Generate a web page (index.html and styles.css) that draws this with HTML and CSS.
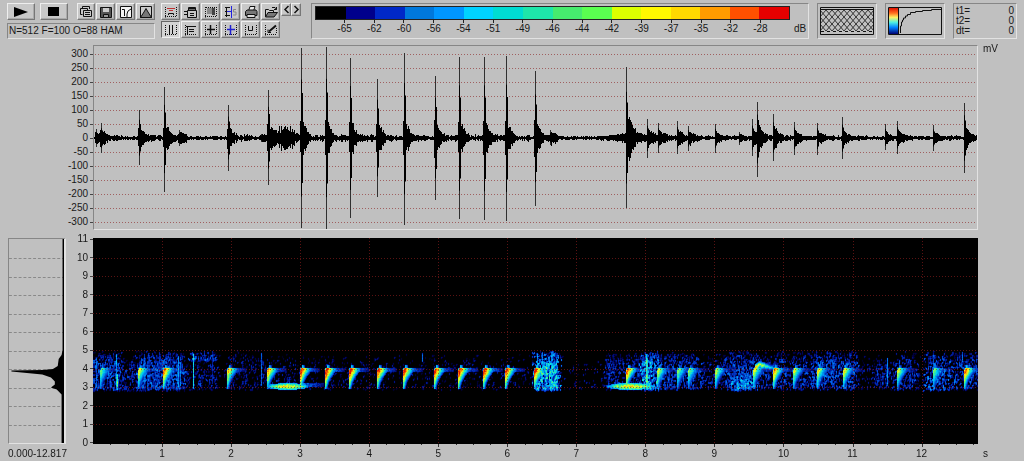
FILE: index.html
```html
<!DOCTYPE html>
<html lang="en">
<head>
    <meta charset="UTF-8">
    <meta name="viewport" content="width=device-width, initial-scale=1.0">
    <title>Sound Analyser</title>
    <link rel="stylesheet" href="styles.css">
</head>
<body>
    <header>
        <div class="controls">
            <div class="btn-row">
                <button class="wide" aria-label="Play"><svg width="16" height="10"><path d="M1 0 15 5 1 10z" fill="#000"/></svg></button>
                <button class="wide stop" aria-label="Stop"><svg width="11" height="9"><path d="M0 0h11v9H0z" fill="#000"/></svg></button>
                <button aria-label="Copy"><svg class="ico"><path d="M3.500 3V.5h7V3M1.500 2.500h7v2M1.500 2.500v6h2M4.500 4.500h8v6h-8zM6 6.500h5M6 8.500h5"/></svg></button>
                <button aria-label="Save"><svg class="ico"><path d="M1.500 1.500h11v10h-11z" fill="#555"/><path d="M4 2h6v4H4z" fill="#ccc" stroke="none"/><path d="M4.500 8.500h5v3h-5z" fill="#999"/></svg></button>
                <button aria-label="Transfer curve"><svg class="ico"><path d="M1.500.5h11v11h-11z" fill="#f4f4f4"/><path d="M3 3.500h2.500V10M8 11V8l1-3 3-2"/></svg></button>
                <button aria-label="Envelope"><svg class="ico"><path d="M1.500.5h11v11h-11z" fill="#ccc"/><path d="M1.500 11.500 5 6l2-3.500L9 6l3.500 5.500z" fill="#777"/></svg></button>
            </div>
            <p class="status inset">N=512 F=100 O=88 HAM</p>
        </div>

        <div class="tools">
            <div class="btn-row">
                <button aria-label="Display"><svg class="ico"><path class="frame" d="M1.500 1v10.500M1 10.500h12M12.500 1v9"/><path d="M3 2.500h8M5 4.500h4" stroke="#c03030"/><path d="M4.500 9V7.500h5V9"/></svg></button>
                <button aria-label="Print setup"><svg class="ico"><path d="M4.500 4V1.500h7V4M3.500 4.500h9v7h-9zM0 5.500h3M0 8.500h3M6 7.500h4M6 9.500h4"/><path d="M5 2.500h6" stroke-width="2"/></svg></button>
                <button aria-label="Select area"><svg class="ico"><path d="M3 2h7v6H3z" fill="#888" stroke="none"/><path class="frame" d="M1.500 1v10.500M1 10.500h12M12.500 1v9M2 1.500h10"/><path d="M8 2h3v7H8z" fill="#444" stroke="none"/></svg></button>
                <button aria-label="Spectrum at cursor"><svg class="ico"><path d="M2.500 1v10M1 1.500h5M1 5.500h5M1 9.500h5"/><path d="M7.500 0v12M3 5.500h4" stroke="#2020e0"/><path d="M12 3.500H9.500v2.500H12v3H9" stroke="#888"/></svg></button>
                <button aria-label="Print"><svg class="ico"><path d="M4.500 5 6 .5h5L9.500 5" fill="#eee"/><path d="M1.500 5.500 3 4h9l1 1.500v4H1.500z" fill="#777"/><path d="M3 8.500h8v3H3z" fill="#ddd"/></svg></button>
                <button aria-label="Open"><svg class="ico"><path d="M1.500 11V3.500h3l1 1h4V6" fill="#ccc"/><path d="M1.500 11 4 6.500h9.500L10 11z" fill="#777"/><path d="M8 1.500h3l1.500 2M12.500 1v2.500H10"/></svg></button>
                <button class="step" aria-label="Previous"><svg width="7" height="9"><path d="M5.500 1 2 4.500l3.500 3.500"/></svg></button><button class="step" aria-label="Next"><svg width="7" height="9"><path d="M1.500 1 5 4.500 1.500 8"/></svg></button>
            </div>
            <div class="btn-row">
                <button class="pressed" aria-label="Time cursors"><svg class="ico"><path class="frame" d="M1.500 1v10.500M1 10.500h12M12.500 1v9"/><path d="M5.500 1v9M8.500 1v9"/></svg></button>
                <button aria-label="Frequency cursors"><svg class="ico"><path class="frame" d="M1.500 1v10.500M1 10.500h12"/><path d="M2 2.500h10M5 5.500h5M5 7.500h5M3.500 2v8"/></svg></button>
                <button aria-label="Cross cursor"><svg class="ico"><path class="frame" d="M1.500 1v10.500M1 10.500h12M12.500 1v9"/><path d="M6.500 1v9M3 5.500h8" stroke-width="1.500"/></svg></button>
                <button aria-label="Marker"><svg class="ico"><path class="frame" d="M1.500 1v10.500M1 10.500h12M12.500 1v9"/><path d="M6.500 1v10M3 5.500h8" stroke="#2020d0" stroke-width="1.500"/></svg></button>
                <button aria-label="Box cursor"><svg class="ico"><path class="frame" d="M1.500 1v10.500M1 10.500h12M12.500 1v9"/><path d="M4.500 2v4.500h4V2"/></svg></button>
                <button aria-label="Draw"><svg class="ico"><path class="frame" d="M1.500 1v10.500M1 10.500h12M12.500 4v6"/><path d="m5 7.500 7-6" stroke-width="2"/><path d="M4 5.500v3h3"/></svg></button>
            </div>
        </div>

        <section class="scale inset">
            <div class="swatches">
                <i class="c1"></i><i class="c2"></i><i class="c3"></i><i class="c4"></i><i class="c5"></i><i class="c6"></i><i class="c7"></i><i class="c8"></i><i class="c9"></i><i class="c10"></i><i class="c11"></i><i class="c12"></i><i class="c13"></i><i class="c14"></i><i class="c15"></i><i class="c16"></i>
            </div>
            <ul class="scale-labels">
                <li>-65</li><li>-62</li><li>-60</li><li>-56</li><li>-54</li><li>-51</li><li>-49</li><li>-46</li><li>-44</li><li>-42</li><li>-39</li><li>-37</li><li>-35</li><li>-32</li><li>-28</li>
            </ul>
            <span class="unit">dB</span>
        </section>

        <div class="thumb inset">
            <svg viewBox="0 0 54 28" width="54" height="28">
                <defs>
                    <pattern id="mesh" width="6" height="7" patternUnits="userSpaceOnUse" y="3">
                        <path d="M0 0 6 7M6 0 0 7" stroke="#222" stroke-width=".9"/>
                    </pattern>
                </defs>
                <path d="M1 3h52v21H1z" fill="url(#mesh)" stroke="none"/>
                <path d="M.5.500h53v27H.5zM0 2.500h54"/>
                <path d="M1 24.500h52" stroke-dasharray="3 3"/>
            </svg>
        </div>

        <div class="thumb inset">
            <svg viewBox="0 0 54 28" width="54" height="28">
                <defs>
                    <linearGradient id="heat" x1="0" y1="0" x2="0" y2="1">
                        <stop offset="0" stop-color="#e01000"/>
                        <stop offset=".2" stop-color="#ff7020"/>
                        <stop offset=".36" stop-color="#fff060"/>
                        <stop offset=".55" stop-color="#50f0e0"/>
                        <stop offset=".75" stop-color="#0080ff"/>
                        <stop offset="1" stop-color="#000070"/>
                    </linearGradient>
                </defs>
                <path d="M1 1h9v26H1z" fill="url(#heat)" stroke="none"/>
                <path d="M.5.500h53v27H.5zM10.500 0v28"/>
                <path d="M12.500 26v-7h1v-4h1v-2h1v-2h2V9h2V7.500h3v-2h5v-1h7v-1h9v-1h10V1"/>
            </svg>
        </div>

        <dl class="readout inset">
            <dt>t1=</dt><dd>0</dd>
            <dt>t2=</dt><dd>0</dd>
            <dt>dt=</dt><dd>0</dd>
        </dl>
    </header>

    <main>
        <ul class="axis wave-axis">
            <li>300</li><li>250</li><li>200</li><li>150</li><li>100</li><li>50</li><li>0</li><li>-50</li><li>-100</li><li>-150</li><li>-200</li><li>-250</li><li>-300</li>
        </ul>
        <div class="wave inset"><canvas id="wave"></canvas></div>
        <span class="mv">mV</span>

        <div class="spectrum inset">
            <svg viewBox="0 0 57 204" preserveAspectRatio="none">
                <path class="dashes" d="M0 19.500h56M0 38.500h56M0 56.500h56M0 75.500h56M0 93.500h56M0 112.500h56M0 130.500h56M0 149.500h56M0 167.500h56M0 186.500h56"/>
                <path class="shape" d="M57 0h-1.500v111l-1 5-3 4-1 7-5 3-10 1-33 .5v1l32 3 9 3 4 4v3l-4 3 6 2 5 5v49.500H57z"/>
            </svg>
        </div>
        <ul class="axis spec-axis">
            <li>11</li><li>10</li><li>9</li><li>8</li><li>7</li><li>6</li><li>5</li><li>4</li><li>3</li><li>2</li><li>1</li><li>0</li>
        </ul>
        <div class="spec"><canvas id="spec"></canvas></div>

        <span class="range">0.000-12.817</span>
        <ul class="time-axis">
            <li>1</li><li>2</li><li>3</li><li>4</li><li>5</li><li>6</li><li>7</li><li>8</li><li>9</li><li>10</li><li>11</li><li>12</li>
        </ul>
        <span class="sec">s</span>
    </main>

    <script src="plot.js"></script>
</body>
</html>
```
FILE: styles.css
```css
* { box-sizing: border-box; margin: 0; padding: 0; }

body {
    min-height: 100vh;
    display: flex;
    flex-direction: column;
    background: #c0c0c0;
    color: #181818;
    font: 10px/12px "Liberation Sans", Arial, sans-serif;
}
ul { list-style: none; }
svg { display: block; fill: none; stroke: #111; }
.inset {
    border: 1px solid;
    border-color: #868686 #e2e2e2 #e2e2e2 #868686;
}

/* toolbar */
header {
    display: flex;
    height: 45px;
    padding: 3px 7px 6px;
}
.controls { width: 148px; margin-right: 6px; }
.tools { margin-right: 10px; }
.btn-row { display: flex; gap: 1px; margin-bottom: 1px; }
button {
    display: flex;
    align-items: center;
    justify-content: center;
    width: 19px;
    height: 17px;
    background: #c8c8c8;
    border: 1px solid;
    border-color: #eee #777 #777 #eee;
    box-shadow: inset -1px -1px #aaa;
}
button svg { flex: none; }
button svg[width] path { stroke: none; }
.ico { width: 14px; height: 12px; }
.frame { stroke-dasharray: 1 1; }
.wide { width: 28px; margin-right: 4px; }
.stop { margin-right: 8px; }
.pressed {
    background: #d4d4d4;
    border-color: #666 #eee #eee #666;
    box-shadow: none;
}
.step { width: 10px; height: 13px; }
.step + .step { margin-left: -1px; }
button.step svg path { stroke: #111; stroke-width: 1.5; }
.status { height: 16px; margin-top: 3px; padding: 1px; }

/* dB scale */
.scale {
    flex: 1;
    display: grid;
    grid-template-columns: 1fr 18px;
    grid-template-rows: 14px 1fr;
    height: 36px;
    padding: 2px 0 0 3px;
    margin-right: 8px;
}
.swatches { display: flex; border: 1px solid #222; }
.swatches i { flex: 1; }
.c1 { background: #000; }
.c2 { background: #00008c; }
.c3 { background: #0028c8; }
.c4 { background: #0078dc; }
.c5 { background: #0096ff; }
.c6 { background: #00d2ff; }
.c7 { background: #00dcd2; }
.c8 { background: #1ee6aa; }
.c9 { background: #46eb6e; }
.c10 { background: #5aff50; }
.c11 { background: #dcff00; }
.c12 { background: #fff800; }
.c13 { background: #ffd800; }
.c14 { background: #ff9b00; }
.c15 { background: #ff5000; }
.c16 { background: #e60000; }
.scale-labels {
    grid-row: 2;
    display: flex;
    padding: 0 3.1%;
}
.scale-labels li { flex: 1; text-align: center; }
.scale-labels li::before {
    content: "";
    display: block;
    width: 1px;
    height: 3px;
    margin: 0 auto;
    background: #222;
}
.unit { grid-area: 2 / 2; padding: 3px 0 0 4px; }

.thumb { height: 36px; width: 60px; padding: 3px 2px; margin-right: 8px; }
.readout {
    display: grid;
    grid-template-columns: 1fr auto;
    grid-auto-rows: 10px;
    width: 64px;
    height: 36px;
    padding: 2px;
    line-height: 10px;
}

/* plots */
main {
    flex: 1;
    display: grid;
    grid-template-columns: 58px 27px 1fr 46px;
    grid-template-rows: minmax(0, 185fr) 8px minmax(0, 206fr) 17px;
    padding-left: 8px;
}
.axis {
    grid-column: 2;
    display: flex;
    flex-direction: column;
    justify-content: space-between;
}
.axis li {
    display: flex;
    justify-content: flex-end;
    align-items: center;
    gap: 2px;
}
.axis li::after { content: ""; width: 3px; height: 1px; background: #444; }
.wave-axis { padding: 3px 0 2px; }
.spec-axis { grid-row: 3; margin: -5px 0; }
.wave { grid-area: 1 / 3; overflow: hidden; }
.mv { grid-area: 1 / 4; padding-left: 5px; margin-top: -2px; }
.spectrum { grid-area: 3 / 1; border-right-width: 2px; }
.spectrum svg { width: 100%; height: 100%; }
.dashes { stroke: #888; stroke-dasharray: 3 2; }
.shape { fill: #000; stroke: none; }
.spec { grid-area: 3 / 3; margin-bottom: -3px; overflow: hidden; }
canvas { display: block; }
.range { grid-area: 4 / 1; padding-top: 4px; white-space: nowrap; }
.time-axis {
    grid-area: 4 / 3;
    display: flex;
    padding: 4px 0 0 3.9%;
}
/* a second is 7.8% of the 12.817 s recording */
.time-axis li { flex: 0 0 calc(100% / 12.817 / .961); text-align: center; }
.sec { grid-area: 4 / 4; padding: 4px 0 0 5px; }
```
FILE: plot.js
```js
const DURATION = 12.817;
const UNITS = 884; // horizontal resolution of the event tables below

// [position, level up, level down] of each call, levels in plot units
const calls = [
    [2, 9, 9], [7, 15, 15], [45, 28, 27], [70, 51, 54], [85, 8, 8], [134, 33, 33],
    [167, 4, 4], [174, 48, 47], [207, 90, 90], [232, 91, 91], [256, 80, 80],
    [283, 59, 59], [310, 85, 87], [341, 62, 62], [365, 81, 81], [390, 81, 82],
    [412, 82, 83], [441, 67, 68], [457, 8, 7], [533, 71, 70], [554, 19, 20],
    [565, 15, 15], [584, 17, 16], [595, 12, 13], [622, 14, 15], [646, 6, 7],
    [659, 19, 18], [664, 36, 39], [680, 24, 23], [701, 16, 17], [724, 15, 17],
    [749, 21, 21], [792, 14, 12], [804, 17, 16], [840, 13, 13], [871, 35, 35]
];

// [position, strength] of each call in the spectrogram
const chirps = [
    [6, .75], [44, .88], [69, 1.05], [133, .95], [173, 1], [206, 1.1], [231, 1.15],
    [255, 1.15], [283, 1.1], [309, 1.1], [340, 1.1], [364, 1.15], [389, 1.12],
    [411, 1.12], [440, 1.1], [532, 1.05], [563, .86], [583, .78], [594, .78],
    [621, .84], [659, .84], [679, 1], [699, .86], [723, .88], [749, .9],
    [803, .86], [839, .75], [870, 1.05]
];

// [left, right, top, bottom, density, strength]
const patches = [
    [-6, 30, 113, 153, .6, .36], [20, 50, 118, 153, .4, .28], [40, 92, 113, 153, .7, .36],
    [82, 104, 123, 152, .3, .22], [93, 128, 113, 123, .8, .42], [98, 128, 119, 152, .35, .28],
    [128, 170, 112, 152, .26, .24], [160, 204, 116, 147, .22, .25], [200, 265, 116, 152, .18, .22],
    [255, 440, 116, 152, .13, .22], [437, 468, 113, 153, .95, .56], [460, 515, 116, 152, .07, .22],
    [506, 552, 115, 152, .42, .3], [543, 566, 113, 153, .9, .5], [558, 608, 114, 152, .55, .34],
    [600, 637, 116, 152, .3, .28], [628, 664, 113, 152, .56, .36], [634, 664, 133, 153, .75, .5],
    [655, 725, 113, 152, .42, .32], [715, 766, 113, 152, .58, .36], [755, 795, 116, 152, .16, .24],
    [776, 802, 122, 152, .4, .32], [795, 824, 113, 152, .45, .34], [815, 836, 116, 152, .16, .22],
    [828, 856, 113, 153, .6, .42], [850, 892, 113, 152, .48, .34]
];

// [position, top, bottom, strength]
const streaks = [
    [2, 120, 150, .45], [22, 116, 152, .6], [23, 136, 152, .75], [50, 116, 146, .42],
    [84, 118, 149, .55], [86, 124, 148, .5], [99, 116, 151, .7], [118, 116, 146, .3],
    [167, 115, 148, .48], [328, 115, 124, .5], [552, 116, 152, .75], [553, 120, 150, .7],
    [443, 115, 150, .52], [448, 114, 150, .55], [457, 114, 150, .55], [793, 120, 148, .55],
    [868, 114, 124, .5], [455, 120, 148, .55]
];

const stops = [
    [0, 0, 0, 0], [.12, 0, 0, 80], [.26, 0, 40, 180], [.4, 0, 120, 235], [.54, 0, 210, 240],
    [.66, 90, 245, 120], [.78, 240, 250, 20], [.88, 255, 150, 0], [1, 225, 20, 0]
];

let seed = 7;
function rnd() {
    seed = (seed * 16807) % 2147483647;
    return seed / 2147483647;
}

function colour(v) {
    v = Math.max(0, Math.min(1, v));
    let i = 1;
    while (i < stops.length - 1 && stops[i][0] < v) i++;
    const a = stops[i - 1], b = stops[i];
    const k = (v - a[0]) / (b[0] - a[0]);
    return [1, 2, 3].map(n => a[n] + (b[n] - a[n]) * k);
}

function prepare(id) {
    const canvas = document.getElementById(id);
    canvas.width = canvas.parentNode.clientWidth;
    canvas.height = canvas.parentNode.clientHeight;
    return canvas.getContext("2d");
}

function drawWave() {
    const ctx = prepare("wave");
    const w = ctx.canvas.width, h = ctx.canvas.height;
    const mid = Math.round(h / 2), sy = h / 183, sx = w / UNITS;

    ctx.strokeStyle = "#a06060";
    ctx.setLineDash([1, 2]);
    for (let i = -6; i <= 6; i++) {
        const y = Math.round(mid + i * 14 * sy) + .5;
        ctx.beginPath();
        ctx.moveTo(1, y);
        ctx.lineTo(w - 1, y);
        ctx.stroke();
    }

    ctx.fillStyle = "#000";
    for (let x = 0; x < w; x++) {
        const u = x / sx;
        let level = .8 + rnd() * 1.2;
        // slow swells around 2.8 s and 7.7 s
        level += 9 * Math.exp(-Math.pow((u - 192) / 10, 2)) * (.3 + rnd());
        level += 8 * Math.exp(-Math.abs(u - 536) / 11) * (.5 + rnd() * .5);
        for (const [p, up] of calls) {
            const d = u - p;
            if (d >= -1 && d < 24) level += Math.min(2 + up * .22, 16) * Math.exp(-Math.pow(d / 6, 2)) * (.55 + rnd() * .45) + Math.min(up * .06, 2) * rnd();
        }
        const a = level * sy, b = level * (.85 + rnd() * .3) * sy;
        ctx.fillRect(x, Math.round(mid - a), 1, Math.max(1, Math.round(a + b)));
    }
    for (const [p, up, down] of calls) {
        const x = Math.round(p * sx);
        ctx.fillStyle = "#303030";
        ctx.fillRect(x, mid - up * sy, 1, (up + down) * sy);
        ctx.fillStyle = "#000";
        ctx.fillRect(x, mid - up * .65 * sy, 1, (up + down) * .65 * sy);
        ctx.fillRect(x + 1, mid - up * .5 * sy, 1, (up + down) * .5 * sy);
    }
}

function drawSpectrogram() {
    const ctx = prepare("spec");
    const w = ctx.canvas.width, h = ctx.canvas.height - 3;
    const sx = w / UNITS, sy = h / 206;
    const data = new Float32Array(UNITS * 206);
    const put = (x, y, v) => {
        x = Math.round(x);
        y = Math.round(y);
        if (x < 0 || x >= UNITS || y < 0 || y > 205) return;
        data[y * UNITS + x] = Math.max(data[y * UNITS + x], v);
    };

    // background noise, thinning out towards the edges of each patch
    for (const [l, r, t, b, density, strength] of patches) {
        for (let x = l; x < r; x++) {
            const fx = Math.min(1, Math.min(x - l, r - x) / 7);
            const column = .55 + rnd() * .6;
            for (let y = t + Math.floor(rnd() * 3); y < b; y += 2) {
                const fy = Math.min(1, (y - t + 1) / 12, (b - y) / 3);
                if (rnd() > density * fx * (.35 + .65 * fy) * column * 1.25) continue;
                const v = strength * (.35 + rnd() * .95) * (.6 + .4 * fy);
                put(x, y, v);
                put(x, y + 1, v * (.7 + rnd() * .4));
                if (rnd() < .4) put(x + 1, y, v * .8);
            }
        }
    }
    for (const [x, t, b, strength] of streaks) {
        for (let y = t; y < b; y++) put(x, y, strength * (.65 + rnd() * .4));
    }
    // each call is a steep down-sweep with a thin tail at 4 kHz
    for (const [x, s] of chirps) {
        for (let y = 127; y < 151; y++) {
            const down = Math.max(0, y - 133) / 17;
            const width = y < 130 ? 3 : 2.5 + 8 * Math.pow(1 - down, 1.8);
            const peak = s * (y < 130 ? .55 : 1 - down * .45);
            const lean = y > 133 ? 0 : (133 - y) * .4;
            for (let d = 0; d < width; d++) {
                put(x + d + lean, y, peak * (1.02 - d / width * .75) * (.84 + rnd() * .2));
            }
        }
        for (let d = 0; d < 20; d++) {
            for (let y = 130; y < 134; y++) put(x + d, y, s * (.56 - d * .02) * (.55 + rnd() * .55));
        }
    }
    // rising call at 9.7 s
    for (let d = 0; d < 20; d++) {
        for (let k = -3; k < 4; k++) put(661 + d, 129 - Math.min(d, 4) + d * .25 + k, (.98 - d * .025 - Math.abs(k) * .13) * (.8 + rnd() * .25));
    }
    // low bands at 3 kHz
    for (const [c, half] of [[193, 20], [536, 23]]) {
        for (let x = -half; x <= half; x++) {
            const k = 1 - Math.pow(x / (half + 2), 2);
            for (let y = -4; y <= 4; y++) {
                if (Math.abs(y) > 1 + k * 2.5) continue;
                put(c + x, 148 + y, (.42 + .42 * k - Math.abs(y) * .07) * (.8 + rnd() * .3));
            }
        }
    }
    for (let x = 206; x < 230; x++) {
        for (let y = 145; y < 149; y++) put(x, y, (.5 - (x - 206) * .012) * (.5 + rnd() * .6));
    }

    // light smoothing between neighbouring cells
    const smooth = new Float32Array(data);
    for (let i = UNITS; i < data.length - UNITS; i++) {
        smooth[i] = data[i] * .64 + (data[i - 1] + data[i + 1]) * .08 + (data[i - UNITS] + data[i + UNITS]) * .1;
    }

    const img = ctx.createImageData(w, h);
    for (let y = 0; y < h; y++) {
        for (let x = 0; x < w; x++) {
            const u = Math.min(UNITS - 1, Math.floor(x / sx));
            const v = Math.min(205, Math.floor(y / sy));
            const c = colour(smooth[v * UNITS + u]);
            const i = (y * w + x) * 4;
            img.data[i] = c[0];
            img.data[i + 1] = c[1];
            img.data[i + 2] = c[2];
            img.data[i + 3] = 255;
        }
    }
    ctx.putImageData(img, 0, 0);

    ctx.strokeStyle = "rgba(150, 30, 30, .6)";
    ctx.setLineDash([1, 2]);
    ctx.beginPath();
    for (let f = 1; f < 11; f++) {
        const y = Math.round((205 - f * 18.55) * sy) + .5;
        ctx.moveTo(0, y);
        ctx.lineTo(w, y);
    }
    for (let t = 1; t < DURATION; t++) {
        const x = Math.round(t / DURATION * w) + .5;
        ctx.moveTo(x, 0);
        ctx.lineTo(x, h);
    }
    ctx.stroke();

    // quarter second ticks under the plot
    ctx.fillStyle = "#333";
    for (let q = 1; q < DURATION * 4; q++) {
        ctx.fillRect(Math.round(q / 4 / DURATION * w), h, 1, q % 4 ? 1 : 3);
    }
}

function draw() {
    seed = 7;
    drawWave();
    drawSpectrogram();
}

window.addEventListener("resize", draw);
draw();
```
